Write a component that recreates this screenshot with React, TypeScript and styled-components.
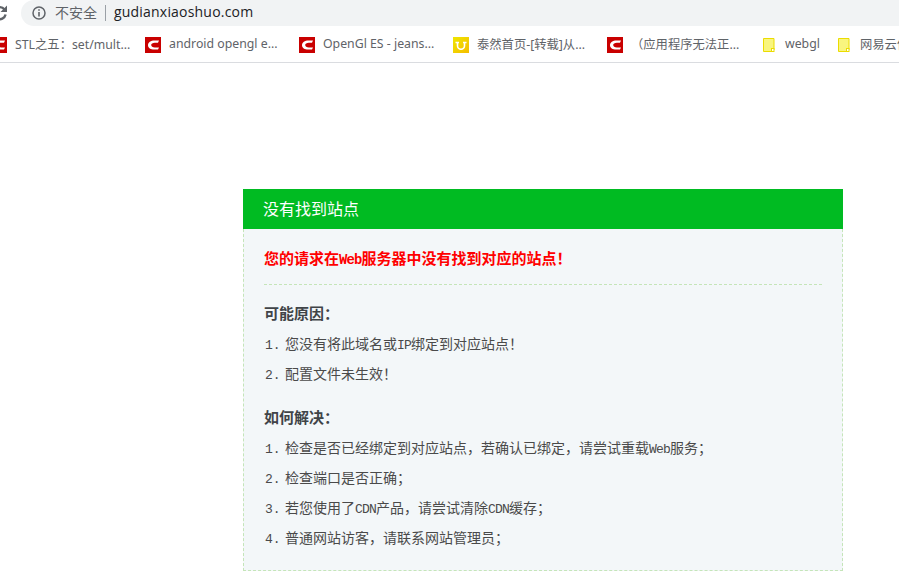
import React from 'react';
import styled, { createGlobalStyle } from 'styled-components';

const GlobalStyle = createGlobalStyle`
  html, body {
    margin: 0;
    padding: 0;
    background: #fff;
    overflow: hidden;
  }
`;

const Toolbar = styled.div`
  display: flex;
  align-items: center;
  height: 26px;
  margin-bottom: 1px;
  font-family: "Noto Sans CJK SC", "Noto Sans", sans-serif;
`;

const ReloadWrap = styled.div`
  width: 21px;
  height: 26px;
  overflow: hidden;
  flex: none;
`;

const ReloadIcon = styled.svg`
  display: block;
  margin-left: -9px;
`;

const AddressBar = styled.div`
  flex: 1;
  height: 26px;
  box-sizing: border-box;
  display: flex;
  align-items: center;
  padding: 0 0 1px 11px;
  background: #f1f3f4;
  border-radius: 13px 0 0 13px;
`;

const NotSecure = styled.span`
  margin: 0 0 2px 9px;
  font-size: 14px;
  color: #5f6368;
`;

const Divider = styled.span`
  width: 1px;
  height: 16px;
  margin: 0 8px;
  background: #9aa0a6;
`;

const Url = styled.span`
  font-family: "Open Sans", "Noto Sans", sans-serif;
  font-size: 14px;
  letter-spacing: 0.2px;
  color: #202124;
  margin-top: -2px;
`;

const BookmarkBar = styled.div`
  display: flex;
  align-items: center;
  height: 35px;
  margin-left: -9px;
  overflow: hidden;
  border-bottom: 1px solid #dadce0;
  font-family: "Noto Sans", "Noto Sans CJK SC", sans-serif;
`;

const Bookmark = styled.div<{ $width: number }>`
  flex: none;
  display: flex;
  align-items: center;
  width: ${(p) => p.$width}px;
  gap: 8px;
  font-size: 12.3px;
  color: #5f6368;
  white-space: nowrap;
`;

const BookmarkLabel = styled.span`
  margin-bottom: 2px;
`;

const Page = styled.main`
  padding: 126px 0 0 243px;
`;

const Card = styled.section`
  width: 600px;
`;

const CardTitle = styled.h1`
  margin: 0;
  height: 40px;
  padding-left: 20px;
  background: #00bb22;
  color: #fff;
  font: 400 16px/38px "Noto Sans CJK SC", sans-serif;
`;

const CardBody = styled.div`
  box-sizing: border-box;
  height: 342px;
  padding: 16px 20px 0;
  background: #f3f7f9;
  border: 1px dashed #c5e5b9;
  border-top: none;
  font-family: "Noto Sans CJK SC", sans-serif;
  color: #444;
`;

const Alert = styled.p`
  margin: 0;
  padding-bottom: 11px;
  border-bottom: 1px dashed #c5e5b9;
  color: #f00;
  font-size: 15px;
  font-weight: 700;
  line-height: 26px;
`;

const SectionTitle = styled.h2<{ $top: number }>`
  margin: ${(p) => p.$top}px 0 0;
  font-size: 15px;
  font-weight: 700;
  line-height: 26px;
  color: #404448;
`;

const Steps = styled.ol`
  margin: 2px 0 0;
  padding: 0;
  list-style: none;
  counter-reset: step;
`;

const Step = styled.li`
  height: 30px;
  font-size: 14px;
  line-height: 30px;
  color: #4a4a4a;
  counter-increment: step;
  &::before {
    content: counter(step) ".";
    display: inline-block;
    width: 21px;
    padding-left: 1px;
    box-sizing: border-box;
    font-family: "Liberation Mono", monospace;
    font-size: 13px;
  }
`;

const Latin = styled.span`
  font-family: "Liberation Mono", monospace;
  font-size: 0.93em;
  letter-spacing: -0.062em;
`;

const CsdnIcon = () => (
  <svg width="16" height="16" viewBox="0 0 16 16">
    <rect width="16" height="16" fill="#c90000" />
    <path d="M14 3.600H9.500C5.800 3.600 3 5.500 3 8.200s2.600 4.400 6.300 4.400H13L14 10.400H9.800C7.700 10.400 6.200 9.500 6.200 8.100S7.700 5.800 9.800 5.800H13z" fill="#fff" />
  </svg>
);

const TairanIcon = () => (
  <svg width="16" height="16" viewBox="0 0 16 16">
    <defs>
      <linearGradient id="tairan" x1="0" y1="0" x2="1" y2="1">
        <stop offset="0" stopColor="#efe600" />
        <stop offset="1" stopColor="#f5bd00" />
      </linearGradient>
    </defs>
    <rect width="16" height="16" fill="url(#tairan)" />
    <path d="M2.500 5.500h3.500M10 5.500h3.500M4.500 5.500v3.200a3.500 3.500 0 0 0 7 0V5.500" fill="none" stroke="#fff" strokeWidth="1.600" />
  </svg>
);

const NoteIcon = () => (
  <svg width="16" height="16" viewBox="0 0 16 16">
    <path d="M2.500 1.500h10.500v11.500l-2 1.500H2.500z" fill="#f9f57e" stroke="#ebdc00" strokeWidth="1" />
    <rect x="10.500" y="11.500" width="2.500" height="3" fill="#fff" stroke="#ebdc00" strokeWidth="1" />
  </svg>
);

const App = () => (
  <>
    <GlobalStyle />
    <Toolbar>
      <ReloadWrap>
        <ReloadIcon width="16" height="26" viewBox="0 0 16 26">
          <path d="M13.500 9.500A6 6 0 1 0 14.600 14.500" fill="none" stroke="#5f6368" strokeWidth="2.400" />
          <path d="M16 5.500v6.500H9.500z" fill="#5f6368" />
        </ReloadIcon>
      </ReloadWrap>
      <AddressBar>
        <svg width="14" height="14" viewBox="0 0 14 14">
          <circle cx="7" cy="7" r="6" fill="none" stroke="#5f6368" strokeWidth="1.500" />
          <path d="M6.200 6h1.600v4.500H6.200zM6.200 3.300h1.600v1.500H6.200z" fill="#5f6368" />
        </svg>
        <NotSecure>不安全</NotSecure>
        <Divider />
        <Url>gudianxiaoshuo.com</Url>
      </AddressBar>
    </Toolbar>
    <BookmarkBar>
      <Bookmark $width={154}><CsdnIcon /><BookmarkLabel>STL之五：set/mult...</BookmarkLabel></Bookmark>
      <Bookmark $width={154}><CsdnIcon /><BookmarkLabel>android opengl e...</BookmarkLabel></Bookmark>
      <Bookmark $width={154}><CsdnIcon /><BookmarkLabel>OpenGl ES - jeans...</BookmarkLabel></Bookmark>
      <Bookmark $width={154}><TairanIcon /><BookmarkLabel>泰然首页-[转载]从...</BookmarkLabel></Bookmark>
      <Bookmark $width={154}><CsdnIcon /><BookmarkLabel>（应用程序无法正...</BookmarkLabel></Bookmark>
      <Bookmark $width={75}><NoteIcon /><BookmarkLabel>webgl</BookmarkLabel></Bookmark>
      <Bookmark $width={120}><NoteIcon /><BookmarkLabel>网易云信</BookmarkLabel></Bookmark>
    </BookmarkBar>
    <Page>
      <Card>
        <CardTitle>没有找到站点</CardTitle>
        <CardBody>
          <Alert>您的请求在<Latin>Web</Latin>服务器中没有找到对应的站点！</Alert>
          <SectionTitle $top={15}>可能原因：</SectionTitle>
          <Steps>
            <Step>您没有将此域名或<Latin>IP</Latin>绑定到对应站点！</Step>
            <Step>配置文件未生效！</Step>
          </Steps>
          <SectionTitle $top={16}>如何解决：</SectionTitle>
          <Steps>
            <Step>检查是否已经绑定到对应站点，若确认已绑定，请尝试重载<Latin>Web</Latin>服务；</Step>
            <Step>检查端口是否正确；</Step>
            <Step>若您使用了<Latin>CDN</Latin>产品，请尝试清除<Latin>CDN</Latin>缓存；</Step>
            <Step>普通网站访客，请联系网站管理员；</Step>
          </Steps>
        </CardBody>
      </Card>
    </Page>
  </>
);

export default App;
